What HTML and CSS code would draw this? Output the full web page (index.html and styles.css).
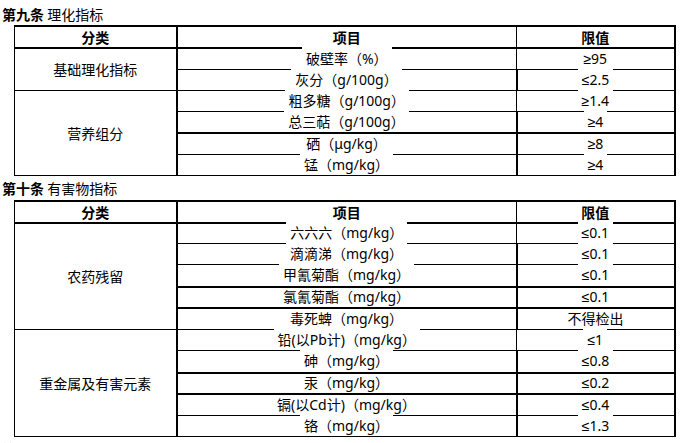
FILE: index.html
```html
<!DOCTYPE html>
<html lang="zh">
<head>
<meta charset="utf-8">
<link rel="stylesheet" href="styles.css">
</head>
<body>
<div class="page">
  <h2 class="title"><b>第九条</b> 理化指标</h2>
  <table class="grid">
    <colgroup><col class="c1"><col class="c2"><col class="c3"></colgroup>
    <tr class="head h22">
      <th>分类</th><th><span class="t k">项目</span></th><th><span class="t k">限值</span></th>
    </tr>
    <tr class="h21">
      <td rowspan="2" class="cat">基础理化指标</td>
      <td><span class="t">破壁率（%）</span></td><td><span class="t k">≥95</span></td>
    </tr>
    <tr class="h21"><td><span class="t">灰分（g/100g）</span></td><td><span class="t">≤2.5</span></td></tr>
    <tr class="h21">
      <td rowspan="4" class="cat">营养组分</td>
      <td><span class="t">粗多糖（g/100g）</span></td><td><span class="t">≥1.4</span></td>
    </tr>
    <tr class="h22"><td><span class="t">总三萜（g/100g）</span></td><td><span class="t">≥4</span></td></tr>
    <tr class="h21 thick"><td><span class="t k">硒（μg/kg）</span></td><td><span class="t k">≥8</span></td></tr>
    <tr class="h21"><td><span class="t">锰（mg/kg）</span></td><td><span class="t">≥4</span></td></tr>
  </table>

  <h2 class="title"><b>第十条</b> 有害物指标</h2>
  <table class="grid second">
    <colgroup><col class="c1"><col class="c2"><col class="c3"></colgroup>
    <tr class="head h22">
      <th>分类</th><th><span class="t k">项目</span></th><th><span class="t k">限值</span></th>
    </tr>
    <tr class="h21">
      <td rowspan="5" class="cat">农药残留</td>
      <td><span class="t">六六六（mg/kg）</span></td><td><span class="t">≤0.1</span></td>
    </tr>
    <tr class="h21"><td><span class="t">滴滴涕（mg/kg）</span></td><td><span class="t">≤0.1</span></td></tr>
    <tr class="h22"><td><span class="t">甲氰菊酯（mg/kg）</span></td><td><span class="t">≤0.1</span></td></tr>
    <tr class="h21 thick"><td><span class="t k">氯氰菊酯（mg/kg）</span></td><td><span class="t k">≤0.1</span></td></tr>
    <tr class="h22 thick"><td><span class="t k">毒死蜱（mg/kg）</span></td><td><span class="t k">不得检出</span></td></tr>
    <tr class="h21">
      <td rowspan="5" class="cat">重金属及有害元素</td>
      <td><span class="t">铅(以Pb计)（mg/kg）</span></td><td><span class="t">≤1</span></td>
    </tr>
    <tr class="h22"><td><span class="t">砷（mg/kg）</span></td><td><span class="t">≤0.8</span></td></tr>
    <tr class="h21 thick"><td><span class="t k">汞（mg/kg）</span></td><td><span class="t k">≤0.2</span></td></tr>
    <tr class="h22 thick"><td><span class="t k">镉(以Cd计)（mg/kg）</span></td><td><span class="t k">≤0.4</span></td></tr>
    <tr class="h21"><td><span class="t">铬（mg/kg）</span></td><td><span class="t">≤1.3</span></td></tr>
  </table>

  <h2 class="title"><b>第十一条</b> 包装与标识</h2>
</div>
</body>
</html>
```

FILE: styles.css
```css
html, body {
  margin: 0;
  padding: 0;
  background: #fff;
}

body {
  font-family: "Noto Sans", "Liberation Sans", "Noto Sans CJK SC", sans-serif;
  font-size: 14px;
  color: #000;
  overflow: hidden;
}

.page {
  padding: 4px 0 0 2px;
}

.title {
  margin: 0;
  font-family: "Noto Sans CJK SC", sans-serif;
  font-size: 14px;
  font-weight: normal;
  line-height: 20px;
  height: 20px;
}

.title b {
  font-weight: bold;
}

.grid {
  border-collapse: collapse;
  table-layout: fixed;
  width: 660px;
  margin: 1px 0 2px 12px;
  border-top: 2px solid #000;
  border-left: 1px solid #000;
  border-right: 2px solid #000;
  border-bottom: 1px solid #000;
}

.grid.second {
  margin-top: 2px;
}

.c1 { width: 162px; }
.c2 { width: 340px; }
.c3 { width: 158px; }

.grid td,
.grid th {
  border: 1px solid #000;
  padding: 0;
  text-align: center;
  vertical-align: middle;
  line-height: 18px;
  font-size: 14px;
  white-space: nowrap;
}

.grid td:first-child,
.grid th:first-child {
  border-right: 2px solid #000;
}

.grid td.cat {
  border-right: 2px solid #000;
  font-family: "Noto Sans CJK SC", sans-serif;
}

.grid th {
  font-weight: bold;
  font-family: "Noto Sans CJK SC", sans-serif;
}

.head th {
  border-bottom: 2px solid #000;
}

.thick td {
  border-top: 2px solid #000;
}

.h21 { height: 21px; }
.h22 { height: 22px; }

.t {
  display: inline-block;
  background: #fff;
  padding: 3px 4px 0;
  margin-top: -3px;
  line-height: 18px;
  vertical-align: top;
}

.t.k {
  padding-top: 0;
  margin-top: 0;
}
```
